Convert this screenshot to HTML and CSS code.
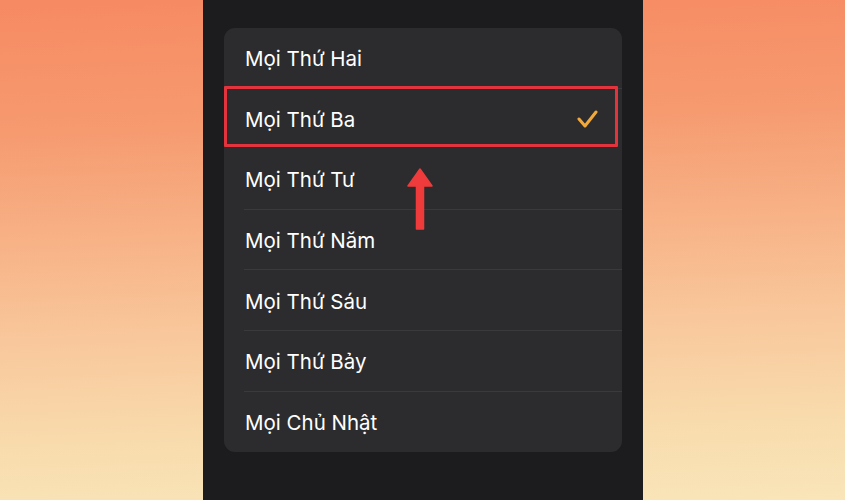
FILE: index.html
```html
<!DOCTYPE html>
<html lang="vi">
<head>
    <meta charset="UTF-8">
    <meta name="viewport" content="width=device-width, initial-scale=1.0">
    <title>Lặp lại</title>
    <link rel="stylesheet" href="styles.css">
</head>
<body>
    <div class="screen">
        <div class="panel">
            <ul class="repeat-list">
                <li class="row"><span class="label">Mọi Thứ Hai</span></li>
                <li class="row selected">
                    <span class="label">Mọi Thứ Ba
                        <svg class="check" width="22" height="20" viewBox="0 0 22 20">
                            <path d="M3 10 L9 17 L20 3" fill="none" stroke="#f2a93b" stroke-width="3" stroke-linecap="round" stroke-linejoin="round"/>
                        </svg>
                    </span>
                </li>
                <li class="row"><span class="label">Mọi Thứ Tư</span></li>
                <li class="row"><span class="label">Mọi Thứ Năm</span></li>
                <li class="row"><span class="label">Mọi Thứ Sáu</span></li>
                <li class="row"><span class="label">Mọi Thứ Bảy</span></li>
                <li class="row"><span class="label">Mọi Chủ Nhật</span></li>
            </ul>

            <!-- mũi tên chỉ vào dòng đã chọn -->
            <svg class="pointer" width="26" height="64" viewBox="0 0 26 64">
                <path d="M13 2 L25 19 L16.5 19 L16.5 62 L9.5 62 L9.5 19 L1 19 Z" fill="#ef3b3b" stroke="#ef3b3b" stroke-width="1.5" stroke-linejoin="round"/>
            </svg>
        </div>
    </div>
</body>
</html>
```

FILE: styles.css
```css
body {
    margin: 0;
    padding: 0;
    font-family: Inter, "Noto Sans", sans-serif;
}

.screen {
    height: 500px;
    display: flex;
    justify-content: center;
    background: linear-gradient(178deg, #f68a62 0%, #f69a70 25%, #f7b185 45%, #f8c89c 65%, #f8dcad 85%, #f9e5b9 100%);
    overflow: hidden;
}

.panel {
    position: relative;
    width: 440px;
    margin-left: 1px;
    background: #1c1c1e;
    padding: 28px 21px 0;
    box-sizing: border-box;
}

.repeat-list {
    list-style: none;
    margin: 0;
    padding: 0;
    background: #2c2c2e;
    border-radius: 11px;
}

.row {
    position: relative;
    height: 60.6px;
    padding-left: 20px;
    display: flex;
}

.label {
    flex: 1;
    display: flex;
    align-items: center;
    justify-content: space-between;
    padding: 2px 24px 0 1px;
    color: #ffffff;
    font-size: 20.5px;
    border-bottom: 1px solid #3a3a3c;
}

.row:last-child .label {
    border-bottom: none;
}

.selected .label {
    border-bottom-color: transparent;
}

.selected::before {
    content: "";
    position: absolute;
    left: 0;
    right: 4px;
    top: -2.5px;
    bottom: 2.5px;
    border: 3px solid #e3343e;
    border-radius: 1px;
}

.check {
    margin-top: 0;
}

.pointer {
    position: absolute;
    left: 204px;
    top: 167px;
}
```
